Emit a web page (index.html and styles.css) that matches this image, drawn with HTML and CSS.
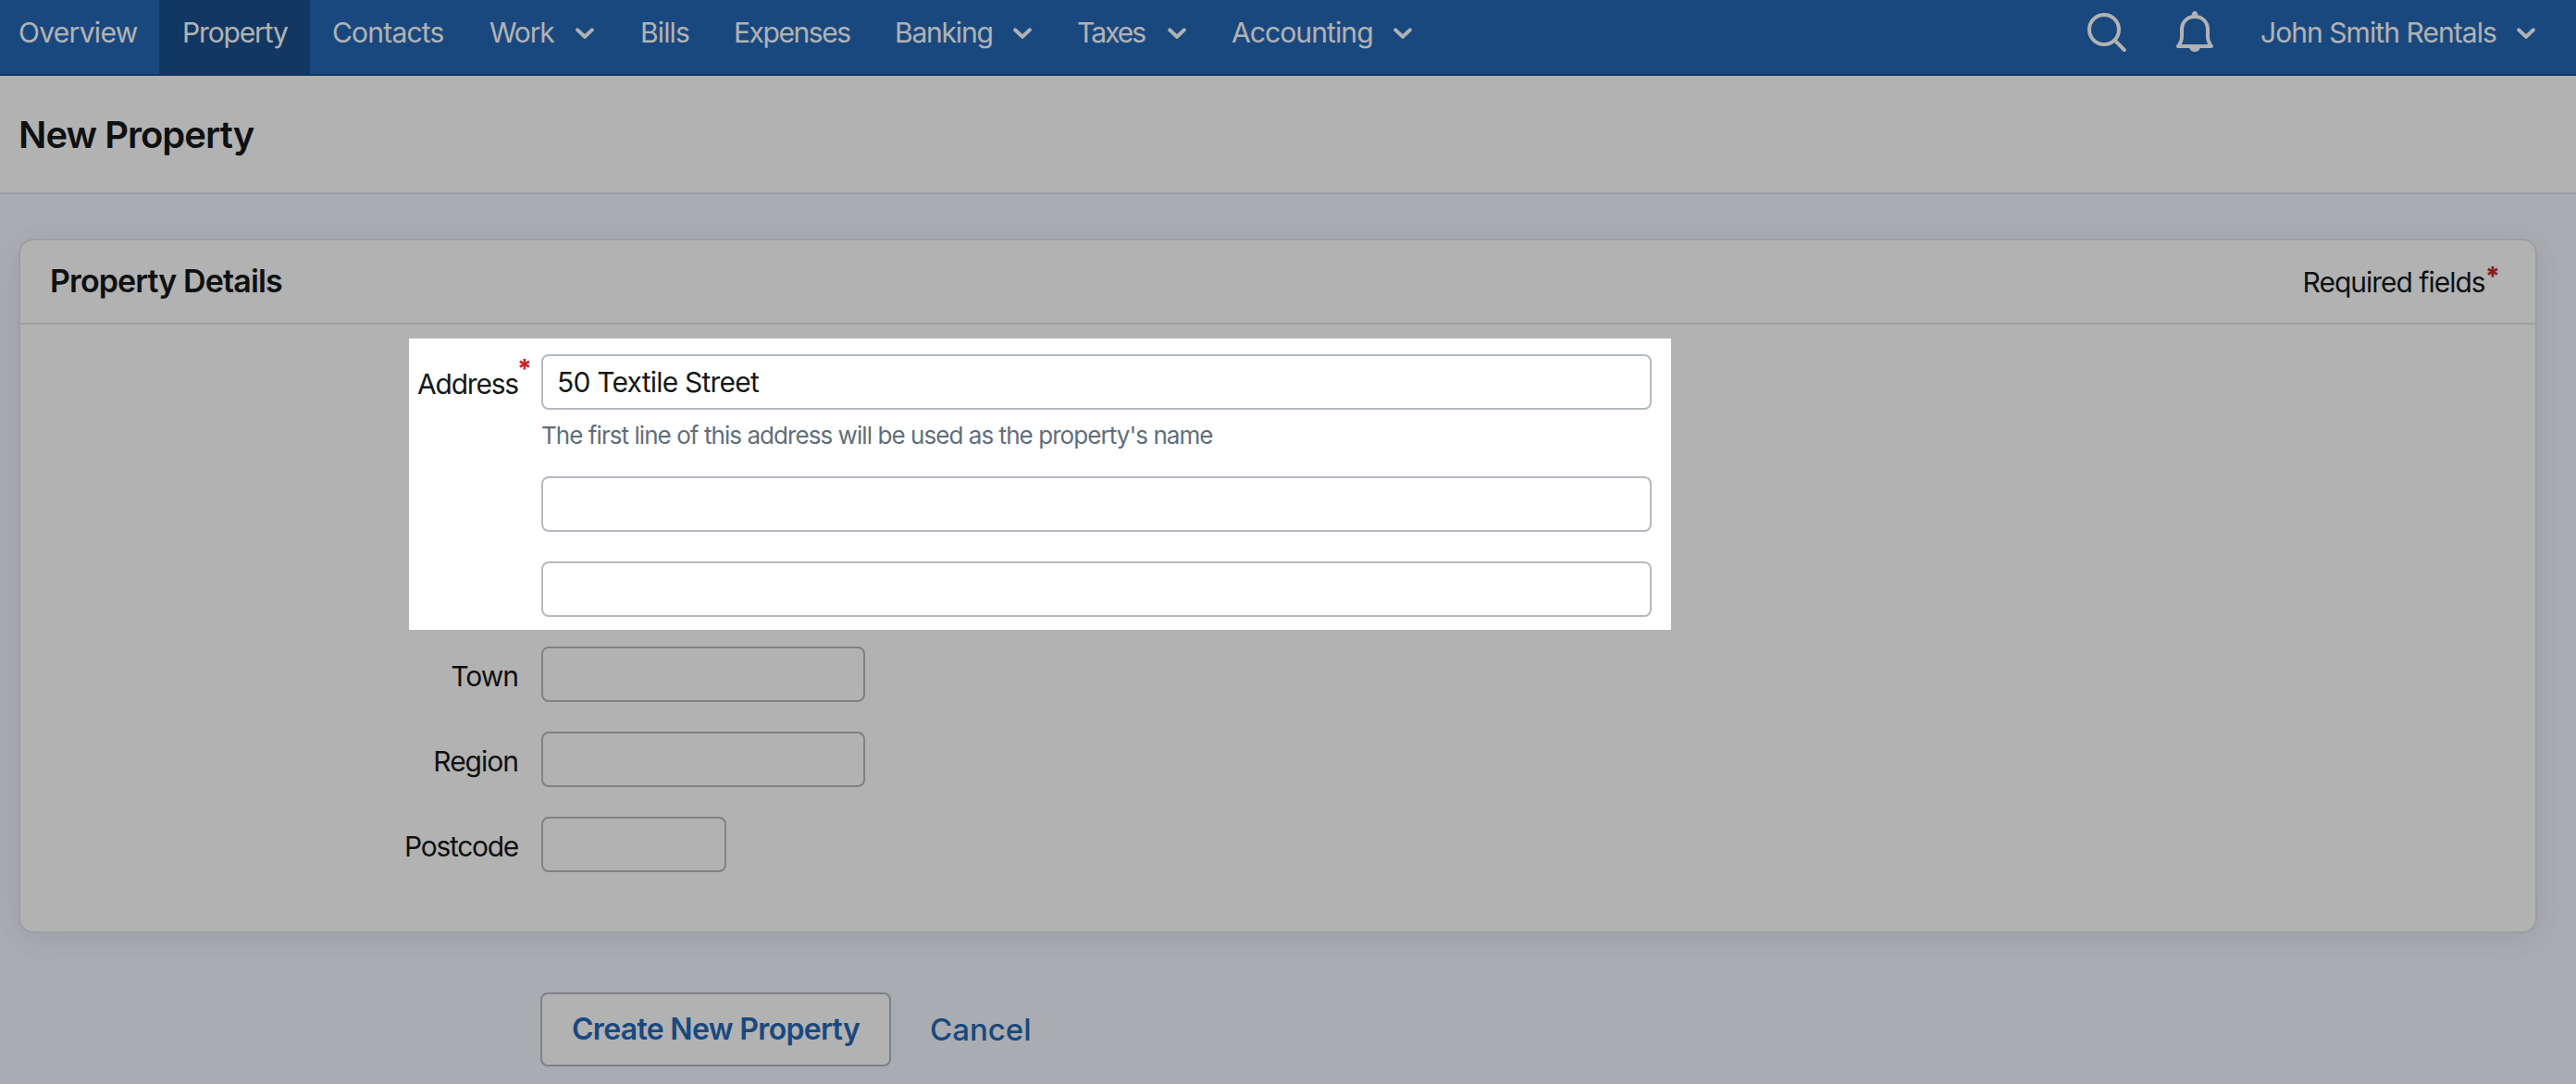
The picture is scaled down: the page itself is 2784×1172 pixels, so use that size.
FILE: index.html
```html
<!DOCTYPE html>
<html lang="en">
<head>
<meta charset="utf-8">
<title>New Property</title>
<link rel="stylesheet" href="styles.css">
</head>
<body>
<svg class="sprite" aria-hidden="true">
  <symbol id="chevron" viewBox="0 0 20 12"><path d="M2.2 2.4 10 9.8 17.8 2.4" fill="none" stroke="currentColor" stroke-width="4" stroke-linecap="round" stroke-linejoin="round"/></symbol>
</svg>
<nav class="nav">
  <a class="item overview">Overview</a>
  <a class="item property active">Property</a>
  <a class="item contacts">Contacts</a>
  <a class="item work">Work<svg class="chevron"><use href="#chevron"/></svg></a>
  <a class="item bills">Bills</a>
  <a class="item expenses">Expenses</a>
  <a class="item banking">Banking<svg class="chevron"><use href="#chevron"/></svg></a>
  <a class="item taxes">Taxes<svg class="chevron"><use href="#chevron"/></svg></a>
  <a class="item accounting">Accounting<svg class="chevron"><use href="#chevron"/></svg></a>
  <div class="tools">
    <svg class="search" viewBox="0 0 44 44"><circle cx="19" cy="20" r="16" fill="none" stroke="currentColor" stroke-width="4"/><path d="M30.5 31.5 40.8 42" stroke="currentColor" stroke-width="4" stroke-linecap="round"/></svg>
    <svg class="bell" viewBox="0 0 40 44"><path d="M2 38H38C35.5 35 34 31 34 27V20C34 11.5 28 6 20 6S6 11.5 6 20V27C6 31 4.500 35 2 38Z" fill="none" stroke="currentColor" stroke-width="4" stroke-linejoin="round"/><path d="M16.500 4.500C17 1 18.500 0 20 0S23 1 23.500 4.500ZM14 39H26C25.500 42 23 44 20 44S14.500 42 14 39Z" fill="currentColor"/></svg>
    <a class="account">John Smith Rentals<svg class="chevron"><use href="#chevron"/></svg></a>
  </div>
</nav>
<header class="page-header"><h1>New Property</h1></header>
<main>
  <section class="card">
    <div class="card-header"><h2>Property Details</h2><span class="required">Required fields<b class="star">*</b></span></div>
    <form class="form">
      <div class="spotlight"></div>
      <div class="row"><label class="address" for="a1">Address<b class="star">*</b></label><div><input id="a1" class="long" value="50 Textile Street"><p class="hint">The first line of this address will be used as the property's name</p></div></div>
      <div class="row"><label></label><input class="long"></div>
      <div class="row"><label></label><input class="long"></div>
      <div class="row"><label for="t">Town</label><input id="t" class="medium"></div>
      <div class="row"><label for="r">Region</label><input id="r" class="medium"></div>
      <div class="row"><label class="postcode" for="p">Postcode</label><input id="p" class="short"></div>
    </form>
  </section>
  <div class="actions"><button class="create">Create New Property</button><a class="cancel">Cancel</a></div>
</main>
</body>
</html>
```
FILE: styles.css
```css
* { box-sizing: border-box; }
html, body { height: 100%; }
body {
  margin: 0;
  overflow: hidden;
  background: #f3f7fe;
  color: #151819;
  font: 400 30px/40px Inter, "Liberation Sans", sans-serif;
  letter-spacing: -1px;
}
.sprite { display: none; }
.nav {
  display: flex;
  height: 82px;
  background: #2568b7;
  border-bottom: 2px solid #1b508f;
  color: #fff;
  white-space: nowrap;
}
.item {
  display: flex;
  align-items: center;
  justify-content: space-between;
  padding: 0 25px 10px 25px;
}
.chevron { display: block; flex: none; width: 20px; height: 12px; margin-top: 2px; }
.overview { width: 172px; padding-left: 20px; letter-spacing: -.7px; }
.property { width: 163px; letter-spacing: -1.14px; }
.contacts { width: 170px; padding-left: 24px; letter-spacing: -.8px; }
.work { width: 162px; padding-left: 24px; letter-spacing: -1.2px; }
.bills { width: 101px; letter-spacing: -.85px; }
.expenses { width: 174px; letter-spacing: -1.45px; }
.banking { width: 198px; letter-spacing: -1.2px; }
.taxes { width: 167px; padding-left: 24px; letter-spacing: -2px; }
.accounting { width: 244px; padding-left: 24px; letter-spacing: -.9px; }
.active { background: #1b508f; }
.tools { display: flex; align-items: center; margin-left: auto; padding: 0 44px 12px 0; }
.search { width: 44px; height: 44px; margin-right: 53px; }
.bell { width: 40px; height: 44px; margin-right: 51px; }
.account { display: flex; align-items: center; justify-content: space-between; width: 297px; padding-top: 2px; letter-spacing: -.94px; }

.page-header {
  display: flex;
  align-items: center;
  height: 128px;
  padding: 2px 0 0 20px;
  background: #fff;
  border-bottom: 2px solid #e0e2e9;
}
h1, h2 { margin: 0; font-weight: 600; }
h1 { font-size: 40px; letter-spacing: -.98px; }
h2 { font-size: 34px; letter-spacing: -.89px; }

main { padding: 48px 42px 0 20px; }
.card {
  height: 751px;
  background: #fff;
  border: 2px solid #e0e2e9;
  border-radius: 16px;
  box-shadow: 0 6px 36px rgba(50, 60, 100, .1);
}
.card-header {
  display: flex;
  align-items: center;
  justify-content: space-between;
  height: 91px;
  padding: 0 38px 2px 32px;
  border-bottom: 2px solid #e0e2e9;
}
.star { color: #c42824; font-weight: 800; line-height: 0; letter-spacing: 0; }
.required { padding-top: 2px; white-space: nowrap; }
.required .star { position: relative; top: -7px; font-size: 28px; }
.form { position: relative; padding-top: 32px; }
.row { display: grid; grid-template-columns: 538px auto; column-gap: 25px; justify-content: start; margin-bottom: 32px; }
.row:has(.hint) { margin-bottom: 29px; }
label { position: relative; padding-top: 12px; text-align: right; }
.address { letter-spacing: -1.2px; }
.address .star { position: absolute; right: -15px; top: 16px; font-size: 28px; }
.postcode { letter-spacing: -1.3px; }
input {
  display: block;
  height: 60px;
  padding: 0 15px;
  background: #fff;
  border: 2px solid #b4babf;
  border-radius: 8px;
  color: inherit;
  font: inherit;
  letter-spacing: -.78px;
}
.long { width: 1200px; }
.medium { width: 350px; }
.short { width: 200px; }
.hint { margin: 12px 0 0; color: #5f6e7b; font-size: 26px; line-height: 31px; letter-spacing: -.94px; }
/* Clear window over the address fields; its shadow dims the rest of the page. */
.spotlight {
  position: absolute;
  left: 420px;
  top: 15px;
  z-index: 10;
  width: 1364px;
  height: 315px;
  box-shadow: 0 0 0 3000px rgba(0, 0, 0, .3);
  pointer-events: none;
}
.actions { display: flex; align-items: center; gap: 42px; margin-top: 64px; padding-left: 564px; color: #2568b7; }
.create {
  width: 379px;
  height: 80px;
  padding: 0;
  background: #fff;
  border: 2px solid #b4babf;
  border-radius: 8px;
  color: inherit;
  font: 600 32px/40px Inter, "Liberation Sans", sans-serif;
  letter-spacing: -.67px;
}
.cancel { font-size: 33px; font-weight: 500; letter-spacing: 0; }
```
